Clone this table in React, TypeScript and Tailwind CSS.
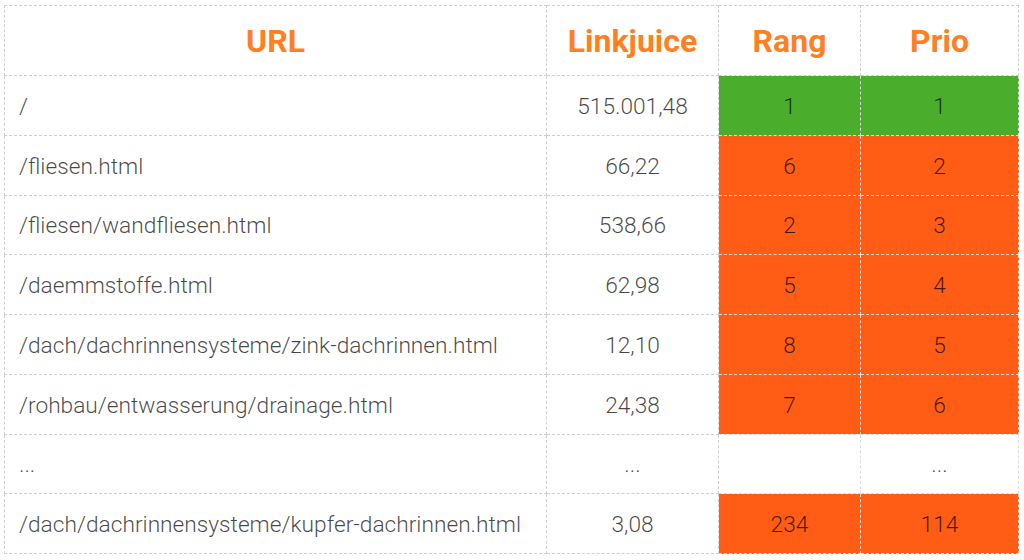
import React from "react";

type Row = { url: string; lj: string; rang: string; prio: string; color: "green" | "orange" | "none" };

const rows: Row[] = [
  { url: "/", lj: "515.001,48", rang: "1", prio: "1", color: "green" },
  { url: "/fliesen.html", lj: "66,22", rang: "6", prio: "2", color: "orange" },
  { url: "/fliesen/wandfliesen.html", lj: "538,66", rang: "2", prio: "3", color: "orange" },
  { url: "/daemmstoffe.html", lj: "62,98", rang: "5", prio: "4", color: "orange" },
  { url: "/dach/dachrinnensysteme/zink-dachrinnen.html", lj: "12,10", rang: "8", prio: "5", color: "orange" },
  { url: "/rohbau/entwasserung/drainage.html", lj: "24,38", rang: "7", prio: "6", color: "orange" },
  { url: "...", lj: "...", rang: "", prio: "...", color: "none" },
  { url: "/dach/dachrinnensysteme/kupfer-dachrinnen.html", lj: "3,08", rang: "234", prio: "114", color: "orange" },
];

const bgFor = (c: Row["color"]) =>
  c === "green" ? "bg-[#4aad2b]" : c === "orange" ? "bg-[#ff5c15]" : "bg-white";

export default function App() {
  return (
    <div
      className="w-[1024px] h-[560px] bg-white pl-[4px] pt-[5px]"
      style={{ fontFamily: "Roboto, 'Liberation Sans', sans-serif" }}
    >
      <table className="border-collapse w-[1014px] table-fixed">
        <colgroup>
          <col className="w-[542px]" />
          <col className="w-[172px]" />
          <col className="w-[142px]" />
          <col className="w-[158px]" />
        </colgroup>
        <thead>
          <tr className="h-[70px]">
            {["URL", "Linkjuice", "Rang", "Prio"].map((h) => (
              <th
                key={h}
                className="border border-dashed border-[#cfcfcf] text-center text-[32px] font-bold text-[#ff7f23] p-0 leading-none"
              >
                {h}
              </th>
            ))}
          </tr>
        </thead>
        <tbody>
          {rows.map((r, i) => (
            <tr key={i} className="h-[59.75px]">
              <td className="border border-dashed border-[#cfcfcf] pl-[14px] pt-[3px] text-left text-[22.7px] font-light text-[rgba(0,0,0,0.72)]">
                {r.url}
              </td>
              <td className="border border-dashed border-[#cfcfcf] pt-[3px] text-center text-[22.7px] font-light text-[rgba(0,0,0,0.72)]">
                {r.lj}
              </td>
              <td
                className={`border border-dashed border-[#dcdcdc] pt-[3px] text-center text-[22.7px] font-light text-[rgba(0,0,0,0.72)] ${bgFor(r.color)}`}
              >
                {r.rang}
              </td>
              <td
                className={`border border-dashed border-[#dcdcdc] pt-[3px] text-center text-[22.7px] font-light text-[rgba(0,0,0,0.72)] ${bgFor(r.color)}`}
              >
                {r.prio}
              </td>
            </tr>
          ))}
        </tbody>
      </table>
    </div>
  );
}
